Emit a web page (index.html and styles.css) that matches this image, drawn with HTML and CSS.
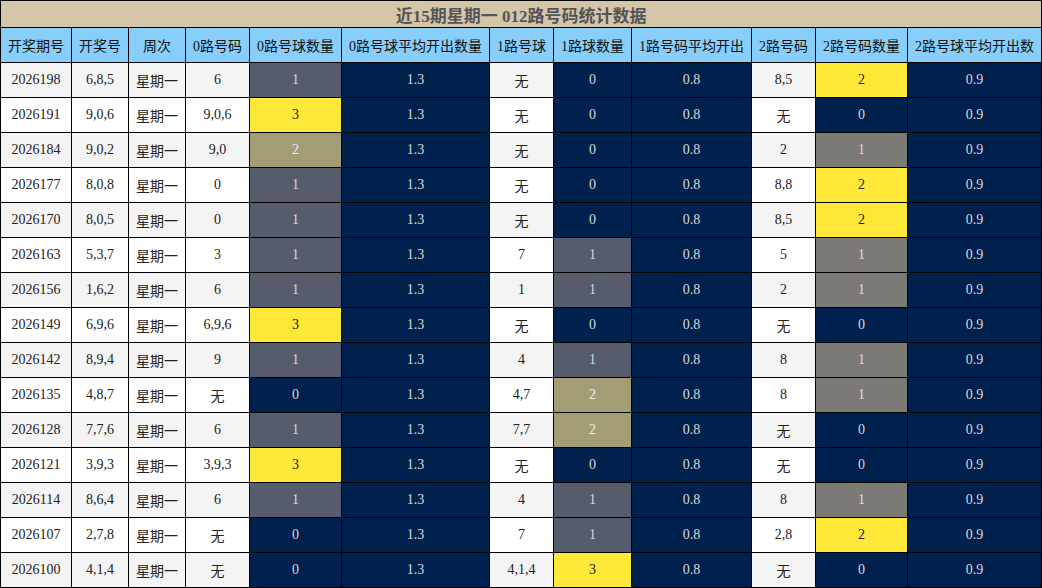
FILE: index.html
```html
<!DOCTYPE html>
<html lang="zh">
<head>
<meta charset="utf-8">
<title>近15期星期一 012路号码统计数据</title>
<link rel="stylesheet" href="styles.css">
</head>
<body>
<table class="stats">
<colgroup>
<col class="w71"><col class="w57"><col class="w57"><col class="w64"><col class="w92"><col class="w148"><col class="w64"><col class="w78"><col class="w120"><col class="w64"><col class="w92"><col class="w134">
</colgroup>
<thead>
<tr class="title-row"><th colspan="12" class="title">近15期星期一 012路号码统计数据</th></tr>
<tr class="head-row">
<th>开奖期号</th><th>开奖号</th><th>周次</th><th>0路号码</th><th>0路号球数量</th><th>0路号球平均开出数量</th><th>1路号球</th><th>1路球数量</th><th>1路号码平均开出</th><th>2路号码</th><th>2路号码数量</th><th>2路号球平均开出数</th>
</tr>
</thead>
<tbody>
<tr class="odd"><td>2026198</td><td>6,8,5</td><td>星期一</td><td>6</td><td class="c-slate">1</td><td class="c-navy">1.3</td><td>无</td><td class="c-navy">0</td><td class="c-navy">0.8</td><td>8,5</td><td class="c-yellow">2</td><td class="c-navy">0.9</td></tr>
<tr><td>2026191</td><td>9,0,6</td><td>星期一</td><td>9,0,6</td><td class="c-yellow">3</td><td class="c-navy">1.3</td><td>无</td><td class="c-navy">0</td><td class="c-navy">0.8</td><td>无</td><td class="c-navy">0</td><td class="c-navy">0.9</td></tr>
<tr class="odd"><td>2026184</td><td>9,0,2</td><td>星期一</td><td>9,0</td><td class="c-khaki">2</td><td class="c-navy">1.3</td><td>无</td><td class="c-navy">0</td><td class="c-navy">0.8</td><td>2</td><td class="c-gray">1</td><td class="c-navy">0.9</td></tr>
<tr><td>2026177</td><td>8,0,8</td><td>星期一</td><td>0</td><td class="c-slate">1</td><td class="c-navy">1.3</td><td>无</td><td class="c-navy">0</td><td class="c-navy">0.8</td><td>8,8</td><td class="c-yellow">2</td><td class="c-navy">0.9</td></tr>
<tr class="odd"><td>2026170</td><td>8,0,5</td><td>星期一</td><td>0</td><td class="c-slate">1</td><td class="c-navy">1.3</td><td>无</td><td class="c-navy">0</td><td class="c-navy">0.8</td><td>8,5</td><td class="c-yellow">2</td><td class="c-navy">0.9</td></tr>
<tr><td>2026163</td><td>5,3,7</td><td>星期一</td><td>3</td><td class="c-slate">1</td><td class="c-navy">1.3</td><td>7</td><td class="c-slate">1</td><td class="c-navy">0.8</td><td>5</td><td class="c-gray">1</td><td class="c-navy">0.9</td></tr>
<tr class="odd"><td>2026156</td><td>1,6,2</td><td>星期一</td><td>6</td><td class="c-slate">1</td><td class="c-navy">1.3</td><td>1</td><td class="c-slate">1</td><td class="c-navy">0.8</td><td>2</td><td class="c-gray">1</td><td class="c-navy">0.9</td></tr>
<tr><td>2026149</td><td>6,9,6</td><td>星期一</td><td>6,9,6</td><td class="c-yellow">3</td><td class="c-navy">1.3</td><td>无</td><td class="c-navy">0</td><td class="c-navy">0.8</td><td>无</td><td class="c-navy">0</td><td class="c-navy">0.9</td></tr>
<tr class="odd"><td>2026142</td><td>8,9,4</td><td>星期一</td><td>9</td><td class="c-slate">1</td><td class="c-navy">1.3</td><td>4</td><td class="c-slate">1</td><td class="c-navy">0.8</td><td>8</td><td class="c-gray">1</td><td class="c-navy">0.9</td></tr>
<tr><td>2026135</td><td>4,8,7</td><td>星期一</td><td>无</td><td class="c-navy">0</td><td class="c-navy">1.3</td><td>4,7</td><td class="c-khaki">2</td><td class="c-navy">0.8</td><td>8</td><td class="c-gray">1</td><td class="c-navy">0.9</td></tr>
<tr class="odd"><td>2026128</td><td>7,7,6</td><td>星期一</td><td>6</td><td class="c-slate">1</td><td class="c-navy">1.3</td><td>7,7</td><td class="c-khaki">2</td><td class="c-navy">0.8</td><td>无</td><td class="c-navy">0</td><td class="c-navy">0.9</td></tr>
<tr><td>2026121</td><td>3,9,3</td><td>星期一</td><td>3,9,3</td><td class="c-yellow">3</td><td class="c-navy">1.3</td><td>无</td><td class="c-navy">0</td><td class="c-navy">0.8</td><td>无</td><td class="c-navy">0</td><td class="c-navy">0.9</td></tr>
<tr class="odd"><td>2026114</td><td>8,6,4</td><td>星期一</td><td>6</td><td class="c-slate">1</td><td class="c-navy">1.3</td><td>4</td><td class="c-slate">1</td><td class="c-navy">0.8</td><td>8</td><td class="c-gray">1</td><td class="c-navy">0.9</td></tr>
<tr><td>2026107</td><td>2,7,8</td><td>星期一</td><td>无</td><td class="c-navy">0</td><td class="c-navy">1.3</td><td>7</td><td class="c-slate">1</td><td class="c-navy">0.8</td><td>2,8</td><td class="c-yellow">2</td><td class="c-navy">0.9</td></tr>
<tr class="odd"><td>2026100</td><td>4,1,4</td><td>星期一</td><td>无</td><td class="c-navy">0</td><td class="c-navy">1.3</td><td>4,1,4</td><td class="c-yellow">3</td><td class="c-navy">0.8</td><td>无</td><td class="c-navy">0</td><td class="c-navy">0.9</td></tr>
</tbody>
</table>
</body>
</html>
```

FILE: styles.css
```css
html, body {
  margin: 0;
  padding: 0;
  background: #ffffff;
}

.stats {
  width: 1042px;
  border-collapse: collapse;
  table-layout: fixed;
  font-family: "Liberation Serif", "Noto Sans CJK SC", serif;
  font-size: 14px;
  color: #222;
}

.w71 { width: 71px; }
.w57 { width: 57px; }
.w64 { width: 64px; }
.w78 { width: 78px; }
.w92 { width: 92px; }
.w120 { width: 120px; }
.w134 { width: 134px; }
.w148 { width: 148px; }

.stats th,
.stats td {
  border: 1px solid #000;
  padding: 0;
  text-align: center;
  vertical-align: middle;
  white-space: nowrap;
  overflow: hidden;
}

.title-row { height: 27px; }

.title {
  background: #d5c5a9;
  color: #555555;
  font-size: 17px;
  font-weight: bold;
}

.head-row { height: 35px; }

.head-row th {
  background: #87cefa;
  color: #111;
  font-weight: normal;
  font-size: 14px;
}

.stats tbody tr { height: 35px; }

.stats td { background: #ffffff; }
.odd td { background: #f4f4f4; }

.stats td.c-navy { background: #00214d; color: #d8d8d8; }
.stats td.c-slate { background: #565c6b; color: #d8d8d8; }
.stats td.c-khaki { background: #a39d75; color: #eeeeee; }
.stats td.c-gray { background: #7b7a75; color: #dddddd; }
.stats td.c-yellow { background: #ffe838; color: #222; }
```
